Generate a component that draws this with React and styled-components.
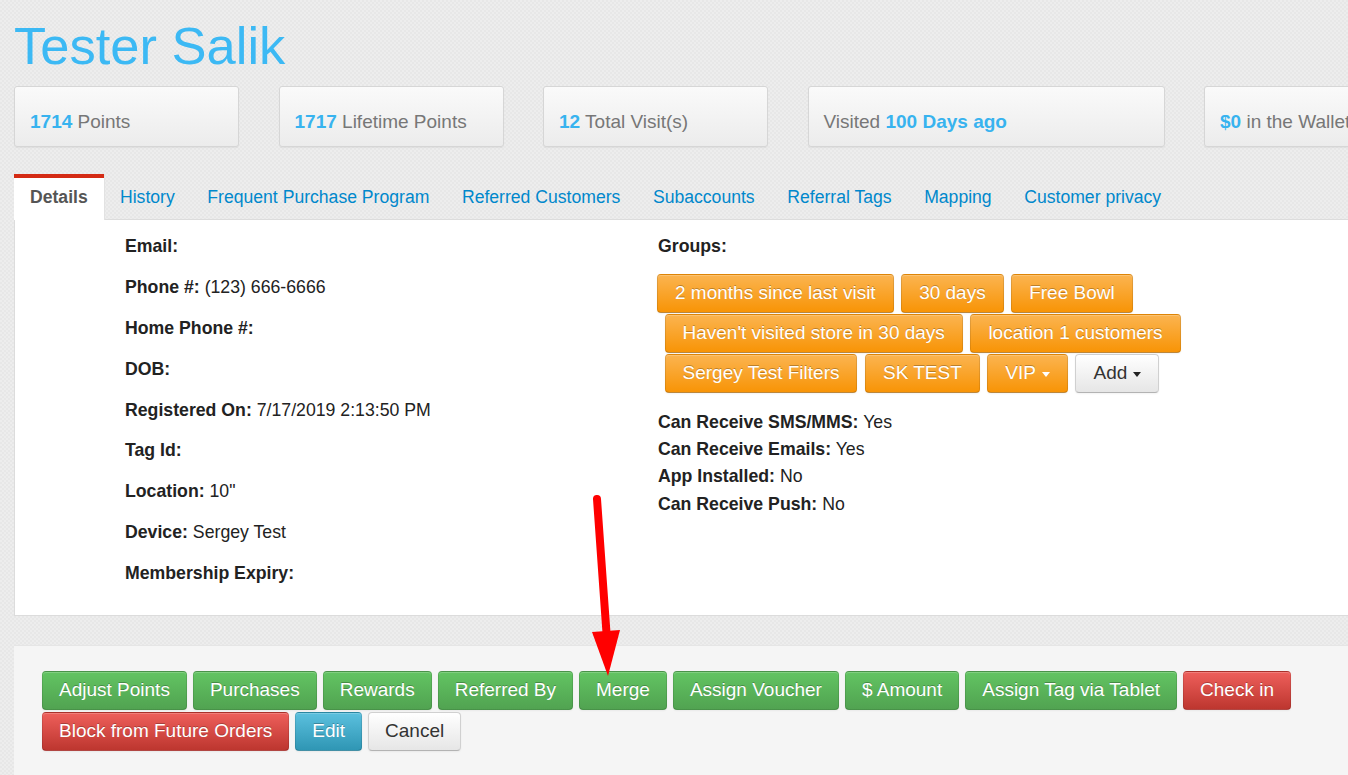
import React from 'react';
import styled, { createGlobalStyle, css } from 'styled-components';

const GlobalStyle = createGlobalStyle`
  html, body {
    margin: 0;
    padding: 0;
    overflow: hidden;
  }

  body {
    font-family: "Liberation Sans", Arial, Helvetica, sans-serif;
    color: #333;
    background-color: #eaeaea;
    background-image: repeating-conic-gradient(#e7e7e7 0 25%, #ededed 0 50%);
    background-size: 4px 4px;
  }
`;

const stats = [
  { value: '1714', label: 'Points' },
  { value: '1717', label: 'Lifetime Points' },
  { value: '12', label: 'Total Visit(s)' },
  { prefix: 'Visited', value: '100 Days ago', wide: true },
  { value: '$0', label: 'in the Wallet' },
];

const tabs = [
  'Details',
  'History',
  'Frequent Purchase Program',
  'Referred Customers',
  'Subaccounts',
  'Referral Tags',
  'Mapping',
  'Customer privacy',
];

const details = [
  ['Email:', ''],
  ['Phone #:', '(123) 666-6666'],
  ['Home Phone #:', ''],
  ['DOB:', ''],
  ['Registered On:', '7/17/2019 2:13:50 PM'],
  ['Tag Id:', ''],
  ['Location:', '10"'],
  ['Device:', 'Sergey Test'],
  ['Membership Expiry:', ''],
];

const groups = [
  '2 months since last visit',
  '30 days',
  'Free Bowl',
  "Haven't visited store in 30 days",
  'location 1 customers',
  'Sergey Test Filters',
  'SK TEST',
];

const flags = [
  ['Can Receive SMS/MMS:', 'Yes'],
  ['Can Receive Emails:', 'Yes'],
  ['App Installed:', 'No'],
  ['Can Receive Push:', 'No'],
];

const actions = [
  { label: 'Adjust Points', kind: 'success' },
  { label: 'Purchases', kind: 'success' },
  { label: 'Rewards', kind: 'success' },
  { label: 'Referred By', kind: 'success' },
  { label: 'Merge', kind: 'success' },
  { label: 'Assign Voucher', kind: 'success' },
  { label: '$ Amount', kind: 'success' },
  { label: 'Assign Tag via Tablet', kind: 'success' },
  { label: 'Check in', kind: 'danger' },
  { label: 'Block from Future Orders', kind: 'danger' },
  { label: 'Edit', kind: 'info' },
  { label: 'Cancel', kind: 'default' },
];

const palette = {
  warning: ['#fbb450', '#f89406'],
  success: ['#62c462', '#51a351'],
  danger: ['#ee5f5b', '#bd362f'],
  info: ['#5bc0de', '#2f96b4'],
  default: ['#ffffff', '#e6e6e6'],
};

const App = () => {
  return (
    <Page>
      <GlobalStyle />
      <Title>Tester Salik</Title>

      <StatRow>
        {stats.map((s, i) => (
          <StatCard key={i} $wide={s.wide}>
            {s.prefix && <>{s.prefix} </>}
            <StatValue>{s.value}</StatValue>
            {s.label && <> {s.label}</>}
          </StatCard>
        ))}
      </StatRow>

      <TabBar>
        {tabs.map((t, i) => (
          <Tab key={t} $active={i === 0}>
            {t}
          </Tab>
        ))}
      </TabBar>

      <Panel>
        <Column>
          {details.map(([k, v]) => (
            <DetailRow key={k}>
              <b>{k}</b>
              {v && <> {v}</>}
            </DetailRow>
          ))}
        </Column>

        <Column>
          <DetailRow>
            <b>Groups:</b>
          </DetailRow>
          <GroupList>
            {groups.map((g) => (
              <Button key={g} $kind="warning">
                {g}
              </Button>
            ))}
            <Button $kind="warning">
              VIP <Caret $light />
            </Button>
            <Button $kind="default">
              Add <Caret />
            </Button>
          </GroupList>
          <FlagList>
            {flags.map(([k, v]) => (
              <FlagRow key={k}>
                <b>{k}</b> {v}
              </FlagRow>
            ))}
          </FlagList>
        </Column>
      </Panel>

      <Actions>
        {actions.map((a) => (
          <ActionButton key={a.label} $kind={a.kind}>
            {a.label}
          </ActionButton>
        ))}
      </Actions>

      <Arrow viewBox="0 0 1348 775" width="1348" height="775">
        <line x1="597" y1="499" x2="607" y2="640" stroke="#ff0000" strokeWidth="8" strokeLinecap="round" />
        <polygon points="592,632 620,630 608,676" fill="#ff0000" />
      </Arrow>
    </Page>
  );
};

export default App;

const Page = styled.div`
  position: relative;
  width: 1420px;
  min-height: 775px;
  padding-left: 14px;
  box-sizing: border-box;
`;

const Title = styled.h1`
  margin: 0;
  padding-top: 16px;
  font-size: 52.5px;
  font-weight: normal;
  line-height: 60px;
  color: #3cb9f4;
`;

const StatRow = styled.div`
  display: flex;
  gap: 39.5px;
  margin-top: 10px;
`;

const StatCard = styled.div`
  flex: none;
  box-sizing: border-box;
  width: ${(p) => (p.$wide ? '357px' : '225px')};
  height: 61px;
  padding: 24px 0 0 15px;
  font-size: 19px;
  line-height: 22px;
  color: #777;
  white-space: nowrap;
  background: linear-gradient(#fafafa, #ececec);
  border: 1px solid #d6d6d6;
  border-radius: 3px;
  box-shadow: 0 1px 1px rgba(0, 0, 0, 0.05);
`;

const StatValue = styled.b`
  color: #38b3ef;
`;

const TabBar = styled.div`
  display: flex;
  margin-top: 27px;
  border-bottom: 1px solid #dcdcdc;
`;

const Tab = styled.div`
  padding: 8px 16.3px 11px;
  margin-bottom: -1px;
  font-size: 17.6px;
  line-height: 22px;
  color: #0088cc;
  border-top: 4px solid transparent;
  white-space: nowrap;

  ${(p) =>
    p.$active &&
    css`
      padding-left: 16px;
      padding-right: 16px;
      color: #555;
      font-weight: bold;
      background: #fff;
      border-top-color: #d42b14;
      box-shadow: 1px 0 0 #e2e2e2;
      padding-bottom: 12px;
    `}
`;

const Panel = styled.div`
  display: grid;
  grid-template-columns: 533px 1fr;
  padding: 6px 0 21px 110px;
  background: #fff;
  border: 1px solid #dcdcdc;
  border-top: none;
  font-size: 17.7px;
  color: #222;
`;

const Column = styled.div`
  display: flex;
  flex-direction: column;
`;

const DetailRow = styled.div`
  line-height: 40.875px;
  white-space: nowrap;
`;

const GroupList = styled.div`
  display: flex;
  flex-wrap: wrap;
  row-gap: 1px;
  margin-top: 7px;
  margin-left: -1px;
  width: 540px;

  & > *:not(:first-child) {
    margin-left: 7.5px;
  }
`;

const FlagList = styled.div`
  margin-top: 16px;
`;

const FlagRow = styled.div`
  line-height: 27.3px;
  white-space: nowrap;
`;

const Button = styled.div`
  display: inline-flex;
  align-items: center;
  box-sizing: border-box;
  height: 39px;
  padding: 0 17px;
  font-size: 19px;
  white-space: nowrap;
  border-radius: 4px;
  background: linear-gradient(${(p) => palette[p.$kind][0]}, ${(p) => palette[p.$kind][1]});
  border: 1px solid rgba(0, 0, 0, 0.1);
  border-bottom-color: rgba(0, 0, 0, 0.25);
  box-shadow: inset 0 1px 0 rgba(255, 255, 255, 0.2), 0 1px 2px rgba(0, 0, 0, 0.05);

  ${(p) =>
    p.$kind === 'default'
      ? css`
          color: #333;
          border-color: #d0d0d0;
          border-bottom-color: #b3b3b3;
        `
      : css`
          color: #fff;
          text-shadow: 0 -1px 0 rgba(0, 0, 0, 0.25);
        `}
`;

const Caret = styled.span`
  display: inline-block;
  width: 0;
  height: 0;
  margin-left: 6px;
  margin-top: 2px;
  border-top: 5px solid ${(p) => (p.$light ? '#fff' : '#222')};
  border-left: 4px solid transparent;
  border-right: 4px solid transparent;
`;

const Actions = styled.div`
  display: flex;
  flex-wrap: wrap;
  column-gap: 6px;
  row-gap: 2px;
  align-content: flex-start;
  margin-top: 29px;
  padding: 25px 28px;
  width: 1280px;
  min-height: 130px;
  background: #f5f5f5;
  border-top: 1px solid #e5e5e5;
`;

const ActionButton = styled(Button)`
  padding: 0 16px;
`;

const Arrow = styled.svg`
  position: absolute;
  left: 0;
  top: 0;
  pointer-events: none;
`;
